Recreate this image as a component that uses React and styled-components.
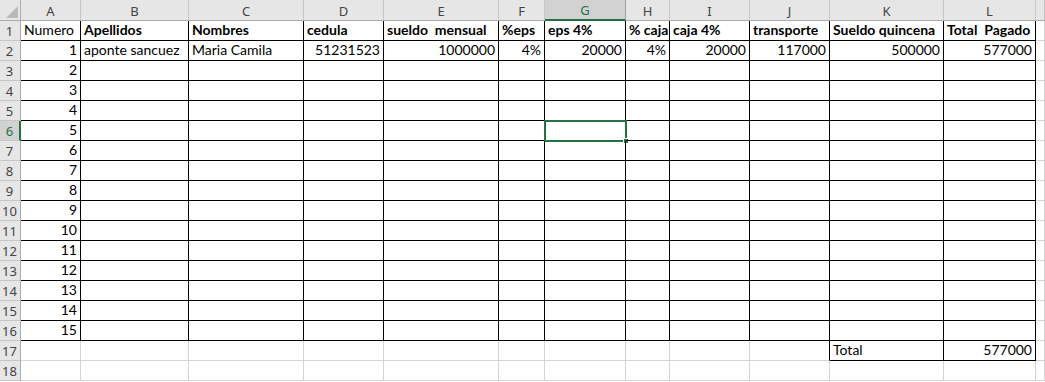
import React from "react";
import styled, { createGlobalStyle, css } from "styled-components";

const GREEN = "#217346";
const GRID = "#d4d4d4";
const HEAD_LINE = "#ababab";

const Global = createGlobalStyle`
  html, body { margin: 0; padding: 0; background: #ffffff; }
  body { font-family: "Lato", "Liberation Sans", sans-serif; overflow: hidden; }
`;

const Sheet = styled.div`
  display: grid;
  grid-template-columns: 21px 60px 108px 115px 80px 115px 46px 81px 44px 80px 80px 114px 92px 1fr;
  grid-template-rows: 21px;
  grid-auto-rows: 20px;
  width: 1045px;
  height: 382px;
  overflow: hidden;
  background: #ffffff;
`;

const Corner = styled.div`
  position: relative;
  box-sizing: border-box;
  background: #e6e6e6;
  border-right: 1px solid ${HEAD_LINE};
  border-bottom: 1px solid ${HEAD_LINE};
  display: flex;
  align-items: flex-end;
  justify-content: flex-end;
  padding: 0 2px 2px 0;
`;

const ColHeader = styled.div`
  box-sizing: border-box;
  background: ${(p) => (p.$selected ? "#d2d2d2" : "#e6e6e6")};
  color: ${(p) => (p.$selected ? GREEN : "#444444")};
  border-right: 1px solid ${(p) => (p.$selected ? "#9f9f9f" : "#c6c6c6")};
  border-bottom: ${(p) => (p.$selected ? `2px solid ${GREEN}` : `1px solid ${HEAD_LINE}`)};
  font-family: "Noto Sans", "Liberation Sans", sans-serif;
  font-size: 13px;
  display: flex;
  align-items: center;
  justify-content: center;
  padding-top: 1px;
`;

const RowHeader = styled.div`
  box-sizing: border-box;
  background: ${(p) => (p.$selected ? "#d2d2d2" : "#e6e6e6")};
  color: ${(p) => (p.$selected ? GREEN : "#444444")};
  border-right: ${(p) => (p.$selected ? `2px solid ${GREEN}` : `1px solid ${HEAD_LINE}`)};
  border-bottom: 1px solid #c6c6c6;
  font-family: "Noto Sans", "Liberation Sans", sans-serif;
  font-size: 13px;
  display: flex;
  align-items: center;
  justify-content: center;
  padding-right: ${(p) => (p.$selected ? "0" : "1px")};
`;

const Cell = styled.div`
  position: relative;
  box-sizing: border-box;
  border-right: 1px solid ${(p) => p.$right};
  border-bottom: 1px solid ${(p) => p.$bottom};
  font-size: 14px;
  color: #000000;
  white-space: pre;
  display: flex;
  align-items: flex-end;
  padding: 0 3px 1px 3px;
  line-height: 18px;
  justify-content: ${(p) => (p.$align === "right" ? "flex-end" : "flex-start")};
  ${(p) =>
    p.$bold &&
    css`
      font-weight: 700;
    `}
`;

const Selection = styled.div`
  position: absolute;
  left: -1px;
  top: -1px;
  right: -2px;
  bottom: -2px;
  border: 2px solid ${GREEN};
  box-sizing: border-box;
  pointer-events: none;
`;

const Handle = styled.div`
  position: absolute;
  right: -4px;
  bottom: -4px;
  width: 6px;
  height: 6px;
  background: ${GREEN};
  border: 1px solid #ffffff;
  box-sizing: border-box;
`;

const COLS = ["A", "B", "C", "D", "E", "F", "G", "H", "I", "J", "K", "L", ""];

const header = [
  { t: "Numero" },
  { t: "Apellidos", b: true },
  { t: "Nombres", b: true },
  { t: "cedula", b: true },
  { t: "sueldo  mensual", b: true },
  { t: "%eps", b: true },
  { t: "eps 4%", b: true },
  { t: "% caja", b: true },
  { t: "caja 4%", b: true },
  { t: "transporte", b: true },
  { t: "Sueldo quincena", b: true },
  { t: "Total  Pagado", b: true },
];

const row2 = [
  { t: "1", r: true },
  { t: "aponte sancuez" },
  { t: "Maria Camila" },
  { t: "51231523", r: true },
  { t: "1000000", r: true },
  { t: "4%", r: true },
  { t: "20000", r: true },
  { t: "4%", r: true },
  { t: "20000", r: true },
  { t: "117000", r: true },
  { t: "500000", r: true },
  { t: "577000", r: true },
];

function cellContent(row, col) {
  if (row === 1) return header[col] || null;
  if (row === 2) return row2[col] || null;
  if (row >= 3 && row <= 16 && col === 0) return { t: String(row - 1), r: true };
  if (row === 17 && col === 10) return { t: "Total" };
  if (row === 17 && col === 11) return { t: "577000", r: true };
  return null;
}

function borders(row, col) {
  if (row >= 1 && row <= 16 && col <= 11) return ["#000", "#000"];
  if (row === 17) {
    if (col === 9) return ["#000", GRID];
    if (col === 10 || col === 11) return ["#000", "#000"];
  }
  return [GRID, GRID];
}

export default function App() {
  const rows = [];
  for (let r = 1; r <= 18; r++) rows.push(r);
  return (
    <>
      <Global />
      <Sheet>
        <Corner>
          <svg width="12" height="12" viewBox="0 0 12 12">
            <polygon points="12,0 12,12 0,12" fill="#b9b9b9" />
          </svg>
        </Corner>
        {COLS.map((c, i) => (
          <ColHeader key={"h" + i} $selected={c === "G"}>
            {c}
          </ColHeader>
        ))}
        {rows.map((r) => (
          <React.Fragment key={r}>
            <RowHeader $selected={r === 6}>{r}</RowHeader>
            {COLS.map((_, ci) => {
              const content = cellContent(r, ci);
              const [right, bottom] = borders(r, ci);
              const selected = r === 6 && ci === 6;
              return (
                <Cell
                  key={ci}
                  $right={right}
                  $bottom={bottom}
                  $align={content && content.r ? "right" : "left"}
                  $bold={content && content.b}
                >
                  {content ? content.t : ""}
                  {selected && (
                    <Selection>
                      <Handle />
                    </Selection>
                  )}
                </Cell>
              );
            })}
          </React.Fragment>
        ))}
      </Sheet>
    </>
  );
}
